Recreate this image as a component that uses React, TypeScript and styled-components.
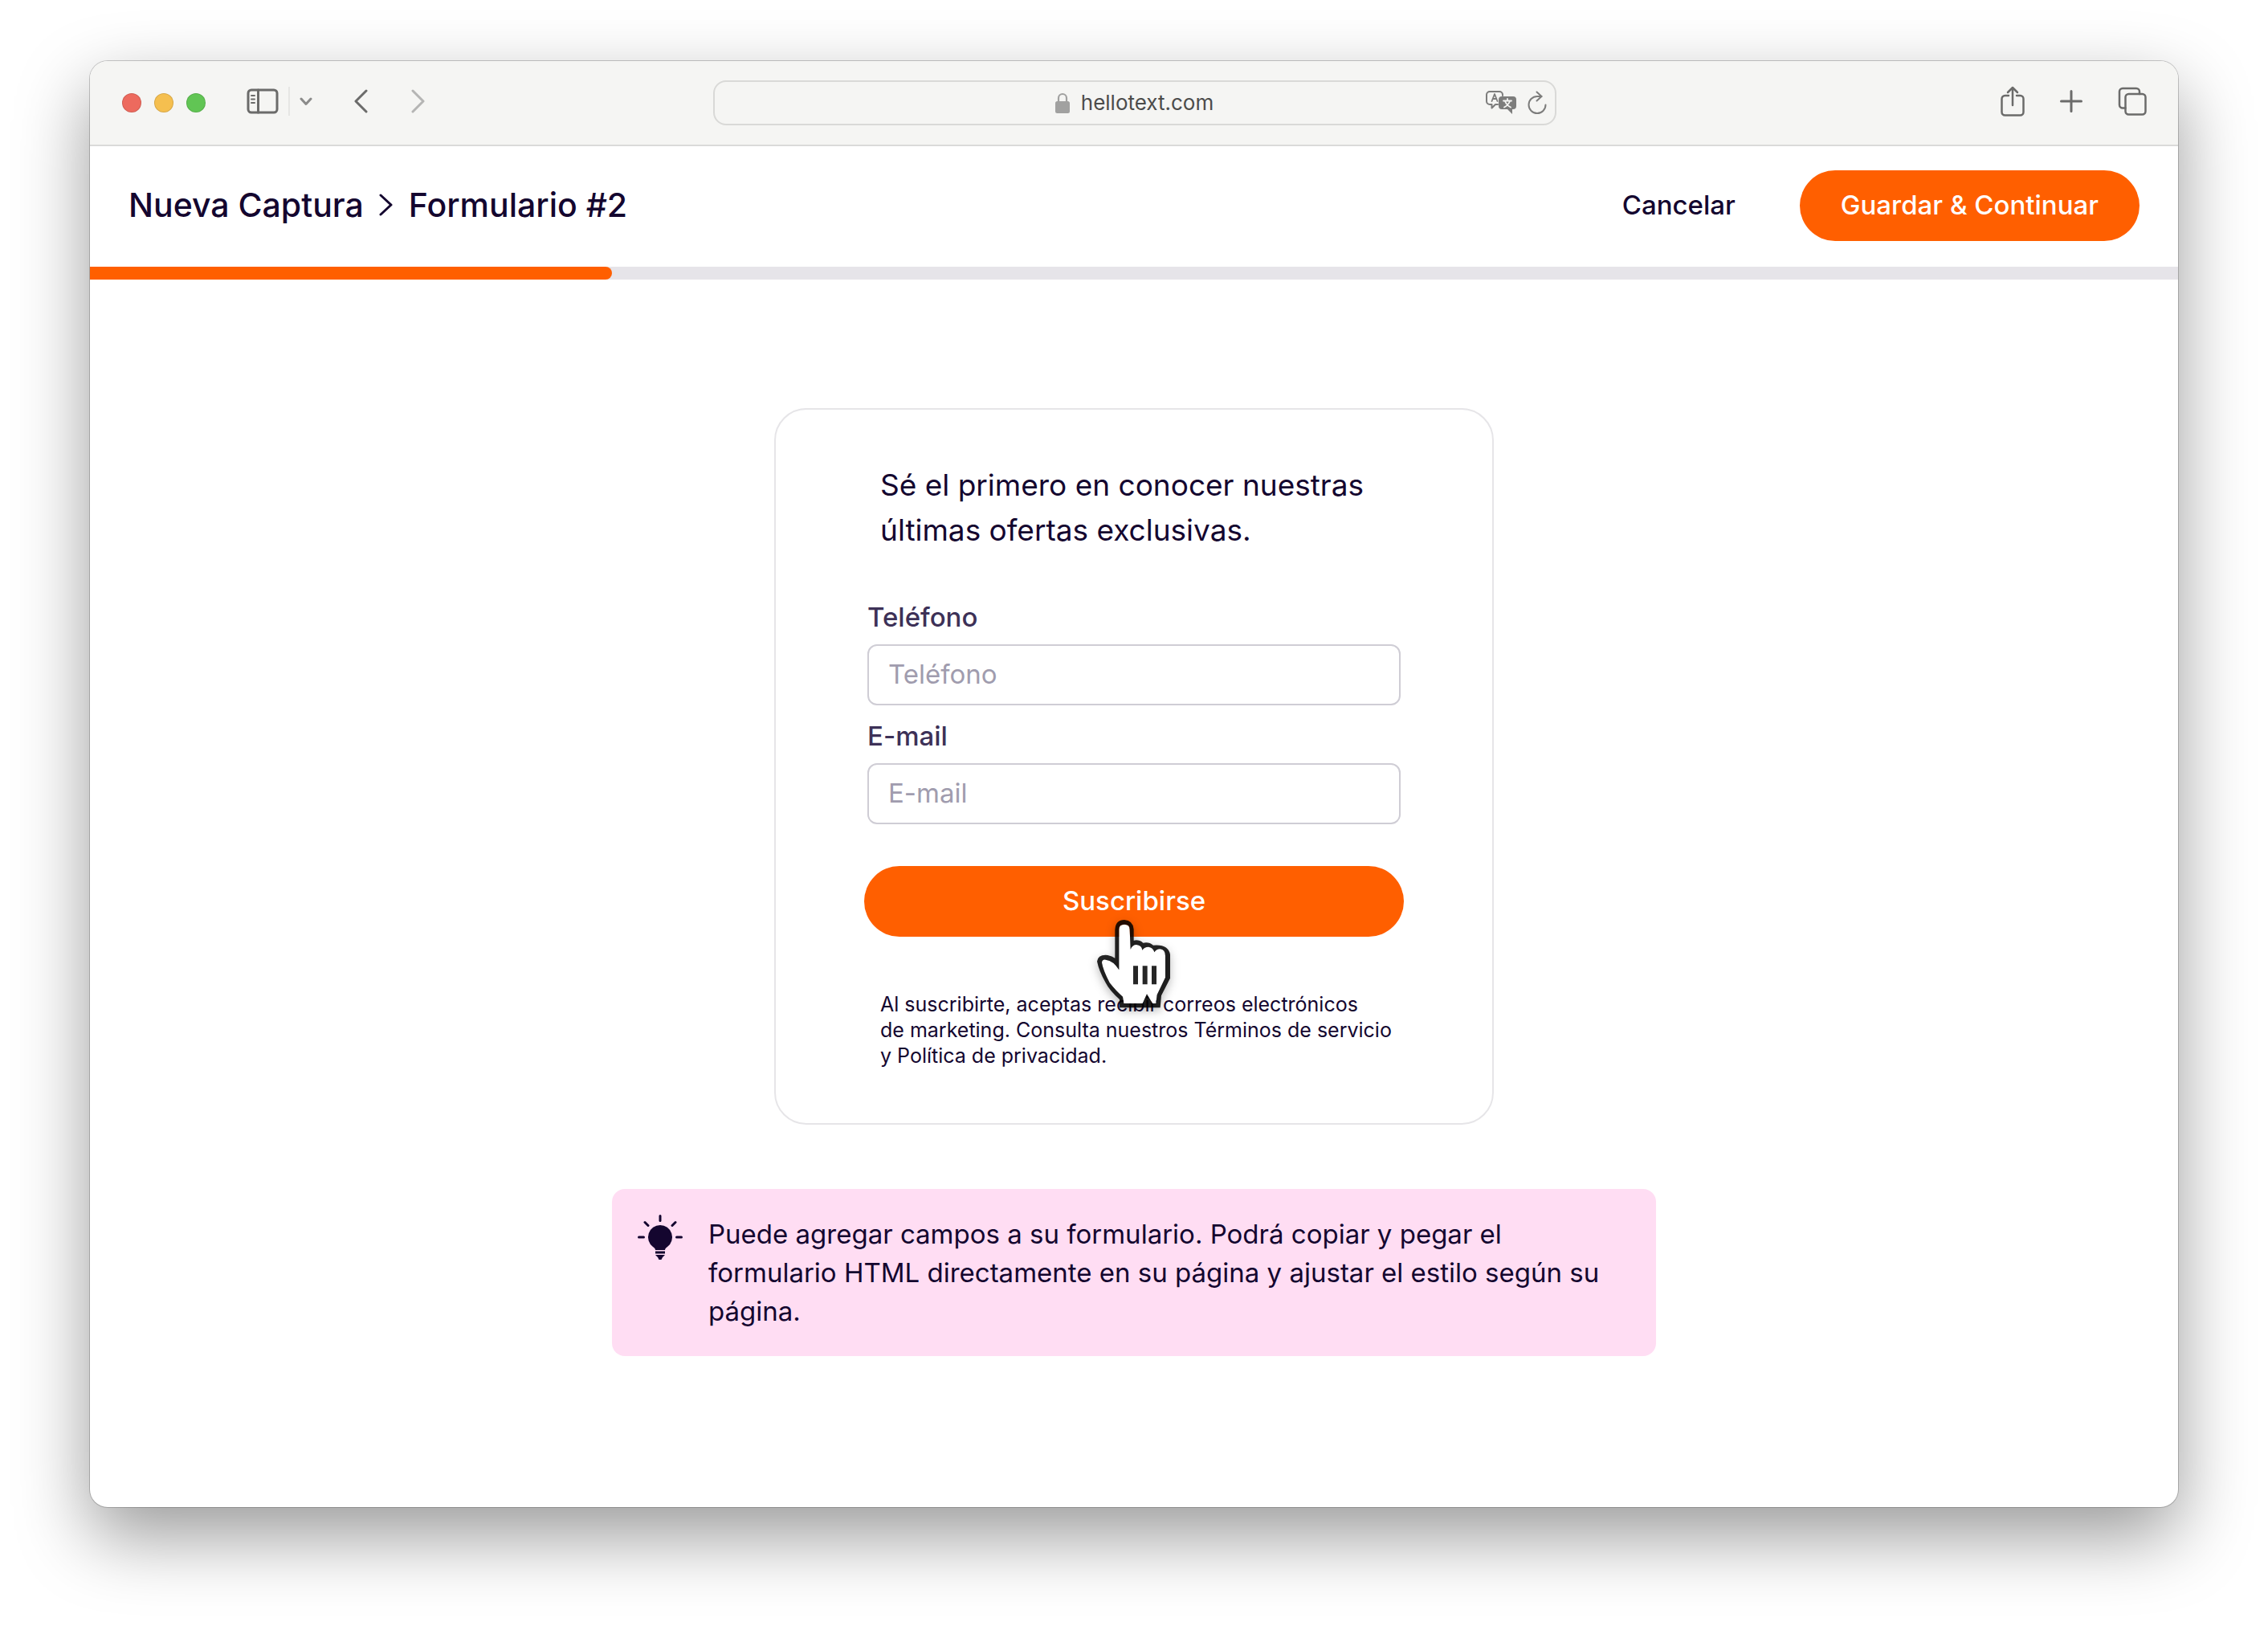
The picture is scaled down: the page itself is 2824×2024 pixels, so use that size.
import React, { useState } from "react";
import styled, { createGlobalStyle } from "styled-components";

const ink = "#14062f";
const orange = "#ff5f00";
const icon = "#6b6b6a";

const GlobalStyle = createGlobalStyle`
  * { box-sizing: border-box; }
  body {
    margin: 0;
    background: #ffffff;
    color: ${ink};
    font-family: Inter, "Liberation Sans", sans-serif;
    -webkit-font-smoothing: antialiased;
  }
  button, input { font: inherit; color: inherit; }
`;

const Desktop = styled.div`
  min-height: 100vh;
  padding: 76px 112px 148px;
  display: flex;
`;

const Window = styled.div`
  flex: 1;
  min-width: 0;
  display: flex;
  flex-direction: column;
  overflow: hidden;
  border-radius: 22px;
  background: #ffffff;
  box-shadow: 0 0 0 1px rgba(0, 0, 0, 0.2), 0 36px 90px rgba(0, 0, 0, 0.4);
`;

const Toolbar = styled.div`
  display: grid;
  grid-template-columns: 1fr minmax(0, 1050px) 1fr;
  align-items: center;
  height: 104px;
  padding: 0 39px 0 40px;
  background: #f5f5f3;
`;

const ToolGroup = styled.div<{ $end?: boolean }>`
  display: flex;
  align-items: center;
  justify-content: ${(p) => (p.$end ? "flex-end" : "flex-start")};
  gap: ${(p) => (p.$end ? 44 : 51)}px;
  padding-bottom: 4px;
`;

const Lights = styled.div`
  display: flex;
  gap: 16px;
  padding-top: 4px;
`;

const Light = styled.button<{ $color: string }>`
  width: 24px;
  height: 24px;
  padding: 0;
  border: 1px solid rgba(0, 0, 0, 0.12);
  border-radius: 50%;
  background: ${(p) => p.$color};
`;

const SidebarGroup = styled.div`
  display: flex;
  align-items: center;
  gap: 12px;
`;

const Separator = styled.span`
  width: 2px;
  height: 36px;
  background: #e6e6e4;
`;

const IconButton = styled.button`
  display: flex;
  padding: 0;
  border: 0;
  background: none;
  color: ${icon};

  &:disabled { color: #b5b5b4; }
`;

const NavGroup = styled.div`
  display: flex;
  gap: 54px;
`;

const AddressBar = styled.div`
  display: grid;
  grid-template-columns: 1fr auto 1fr;
  align-items: center;
  height: 56px;
  padding: 0 10px;
  border: 2px solid #d9d9d7;
  border-radius: 16px;
`;

const Address = styled.label`
  grid-column: 2;
  display: flex;
  align-items: center;
  gap: 14px;
`;

const AddressInput = styled.input`
  field-sizing: content;
  padding: 0;
  border: 0;
  outline: 0;
  background: none;
  color: #4c4c4b;
  font-size: 26px;
  line-height: 32px;
`;

const AddressActions = styled.div`
  display: flex;
  justify-content: flex-end;
  align-items: center;
  gap: 12px;
`;

const Header = styled.header`
  display: flex;
  align-items: center;
  justify-content: space-between;
  height: 152px;
  padding: 0 48px;
  box-shadow: inset 0 2px 0 #dadad9;
`;

const Breadcrumb = styled.nav`
  display: flex;
  align-items: center;
  gap: 18px;
  padding-bottom: 2px;
  font-size: 41px;
  line-height: 48px;
  font-weight: 500;
`;

const Crumb = styled.a`
  color: inherit;
  text-decoration: none;
`;

const Actions = styled.div`
  display: flex;
  align-items: center;
  gap: 80px;
  font-size: 33px;
  line-height: 40px;
  font-weight: 500;
`;

const TextButton = styled.button`
  padding: 0 0 2px;
  border: 0;
  background: none;
`;

const PrimaryButton = styled.button`
  height: 88px;
  padding: 0 51px 2px;
  border: 0;
  border-radius: 44px;
  background: ${orange};
  color: #ffffff;
  font-size: 33px;
  line-height: 40px;
  font-weight: 500;
`;

const Progress = styled.div`
  height: 16px;
  background: #e6e4e9;
`;

const ProgressBar = styled.div`
  height: 100%;
  border-radius: 0 8px 8px 0;
  background: ${orange};
`;

const Content = styled.main`
  flex: 1;
  display: flex;
  flex-direction: column;
  align-items: center;
  gap: 80px;
  padding: 160px 0;
`;

const Card = styled.form`
  width: 896px;
  max-width: 100%;
  display: flex;
  flex-direction: column;
  padding: 66px 110px 68px;
  border: 2px solid #e6e5e8;
  border-radius: 40px;
`;

const Title = styled.p`
  margin: 0 0 60px;
  padding-left: 20px;
  font-size: 37px;
  line-height: 56px;
`;

const Field = styled.div`
  display: flex;
  flex-direction: column;
  gap: 14px;
  padding: 0 4px;
  margin-bottom: 18px;
`;

const FieldLabel = styled.label`
  color: #3d3157;
  font-size: 33px;
  line-height: 40px;
  font-weight: 500;
`;

const TextInput = styled.input`
  width: 100%;
  height: 76px;
  padding: 0 24px 2px;
  border: 2px solid #cfcdd5;
  border-radius: 12px;
  background: #ffffff;
  font-size: 33px;
  line-height: 40px;

  &::placeholder { color: #a09cae; opacity: 1; }
`;

const SubmitRow = styled.div`
  position: relative;
  display: flex;
  flex-direction: column;
  margin: 34px 0 68px;
`;

const Pointer = styled.svg`
  position: absolute;
  top: 64px;
  left: calc(50% - 50px);
  pointer-events: none;
  filter: drop-shadow(0 4px 6px rgba(0, 0, 0, 0.3));
`;

const Legal = styled.p`
  margin: 0;
  padding-left: 20px;
  font-size: 25px;
  line-height: 32px;
`;

const Notice = styled.aside`
  width: 50%;
  display: flex;
  align-items: flex-start;
  gap: 32px;
  padding: 32px;
  border-radius: 16px;
  background: #ffddf3;

  svg { flex: none; }
`;

const NoticeText = styled.p`
  margin: 0;
  font-size: 33px;
  line-height: 48px;
`;

const stroke = {
  fill: "none",
  stroke: "currentColor",
  strokeWidth: 3,
  strokeLinecap: "round" as const,
  strokeLinejoin: "round" as const,
};

const SidebarIcon = () => (
  <svg width="40" height="32" viewBox="0 0 40 32" {...stroke}>
    <rect x="2" y="2" width="36" height="28" rx="4" />
    <path d="M14.500 2v28" />
    <path d="M6 9h4M6 13.500h4M6 18h4" strokeWidth="2" />
  </svg>
);

const ChevronDown = () => (
  <svg width="16" height="12" viewBox="0 0 16 12" {...stroke} stroke="#8b8b8a">
    <path d="M2 3l6 6.500L14 3" />
  </svg>
);

const ChevronLeft = () => (
  <svg width="18" height="30" viewBox="0 0 18 30" {...stroke}>
    <path d="M16 2L3 15l13 13" />
  </svg>
);

const ChevronRight = () => (
  <svg width="18" height="30" viewBox="0 0 18 30" {...stroke}>
    <path d="M2 2l13 13L2 28" />
  </svg>
);

const CrumbChevron = () => (
  <svg width="20" height="30" viewBox="0 0 20 30" {...stroke}>
    <path d="M3 3l13 12L3 27" />
  </svg>
);

const LockIcon = () => (
  <svg width="18" height="26" viewBox="0 0 18 26" fill="#a1a1a0">
    <rect x="0" y="11" width="18" height="15" rx="2.500" />
    <path d="M4 12V7a5 5 0 0 1 10 0v5" fill="none" stroke="#a1a1a0" strokeWidth="2.200" />
  </svg>
);

const TranslateIcon = () => (
  <svg width="40" height="30" viewBox="0 0 40 30" fill="none" stroke="#7d7d7c" strokeWidth="2" strokeLinejoin="round" strokeLinecap="round">
    <path d="M15 17h-3l-4.500 4.500V17H5a4 4 0 0 1-4-4V5a4 4 0 0 1 4-4h12a4 4 0 0 1 4 4v1" />
    <path d="M7.500 13L11 4l3.500 9M8.700 10h4.600" strokeWidth="1.800" />
    <path d="M20 7h14a4 4 0 0 1 4 4v8a4 4 0 0 1-4 4h-1v6l-6-6h-7a4 4 0 0 1-4-4v-8a4 4 0 0 1 4-4z" fill="#7d7d7c" stroke="none" />
    <path d="M22 12.500h10M27 10v2M24 13q2 5 7 7.500M30 13q-2 5-7 7.500" stroke="#f5f5f3" strokeWidth="1.800" />
  </svg>
);

const ReloadIcon = () => (
  <svg width="24" height="30" viewBox="0 0 24 30" {...stroke} stroke="#7d7d7c" strokeWidth="2">
    <path d="M22.500 17.500A10.500 10.500 0 1 1 12 7h5.500" />
    <path d="M11.500 1.500l6 5.500-6 5.500" />
  </svg>
);

const ShareIcon = () => (
  <svg width="30" height="38" viewBox="0 0 30 38" {...stroke} strokeWidth="2.500">
    <path d="M10 12H5.500a4 4 0 0 0-4 4v16.500a4 4 0 0 0 4 4h19a4 4 0 0 0 4-4V16a4 4 0 0 0-4-4H20" />
    <path d="M15 24V2M9 8l6-6 6 6" />
  </svg>
);

const PlusIcon = () => (
  <svg width="28" height="28" viewBox="0 0 28 28" {...stroke}>
    <path d="M14 1.500v25M1.500 14h25" />
  </svg>
);

const TabsIcon = () => (
  <svg width="36" height="36" viewBox="0 0 36 36" {...stroke} strokeWidth="2.500">
    <rect x="9.500" y="9" width="25" height="25.500" rx="4" />
    <path d="M9.500 26.500H6a4 4 0 0 1-4-4V6a4 4 0 0 1 4-4h17a4 4 0 0 1 4 4v3" />
  </svg>
);

const BulbIcon = () => (
  <svg width="56" height="56" viewBox="0 0 56 56" fill={ink} stroke={ink} aria-hidden="true">
    <path
      stroke="none"
      d="M28 13a15 15 0 0 1 9 27c-2 1.500-3 2.500-3 4H22c0-1.500-1-2.500-3-4a15 15 0 0 1 9-27zM22 45.500h12v3H22zM22 50h12l-3 3-1.500 3h-3l-1.500-3z"
    />
    <path
      d="M28 1.500v6M1.500 28h6M48.500 28h6M9 9.500l4 4M47 9.500l-4 4"
      fill="none"
      strokeWidth="3"
      strokeLinecap="round"
    />
  </svg>
);

const hand =
  "M160 110Q160 92 180 92Q200 92 200 110L203 185Q210 168 225 168Q245 170 247 188Q255 176 270 176Q287 178 292 196Q300 184 313 184Q333 186 333 210V290L302 355L298 387H285L264 352L248 387H178L174 362Q150 342 125 310Q100 262 96 235Q97 222 110 224Q140 228 160 262Z";
const handEdge =
  "M145 112Q147 75 180 75Q212 77 215 110V152Q235 148 250 161Q272 156 288 170Q345 165 351 205V293L318 358L314 403H162V372Q125 340 110 310Q85 265 78 230Q82 203 118 207Q134 210 145 218Z";

const HandPointer = () => (
  <Pointer width="100" height="120" viewBox="66 66 300 360" aria-hidden="true">
    <path d={hand} fill="#ffffff" />
    <path d={`${handEdge}${hand}`} fillRule="evenodd" fill="rgba(0,0,0,0.85)" />
    <path d="M213 247h18v69h-18zM248 247h18v69h-18zM282 247h18v69h-18z" fill="#262626" />
  </Pointer>
);

export default function App() {
  const [url, setUrl] = useState("hellotext.com");
  const progress = 25;

  return (
    <>
      <GlobalStyle />
      <Desktop>
        <Window>
          <Toolbar>
            <ToolGroup>
              <Lights>
                <Light $color="#ed6a5e" aria-label="Cerrar" />
                <Light $color="#f5bf4f" aria-label="Minimizar" />
                <Light $color="#61c554" aria-label="Ampliar" />
              </Lights>
              <SidebarGroup>
                <IconButton aria-label="Barra lateral"><SidebarIcon /></IconButton>
                <Separator />
                <IconButton aria-label="Grupos de pestañas"><ChevronDown /></IconButton>
              </SidebarGroup>
              <NavGroup>
                <IconButton aria-label="Atrás"><ChevronLeft /></IconButton>
                <IconButton aria-label="Adelante" disabled><ChevronRight /></IconButton>
              </NavGroup>
            </ToolGroup>
            <AddressBar>
              <Address>
                <LockIcon />
                <AddressInput aria-label="Dirección" value={url} onChange={(e) => setUrl(e.target.value)} />
              </Address>
              <AddressActions>
                <IconButton aria-label="Traducir"><TranslateIcon /></IconButton>
                <IconButton aria-label="Recargar"><ReloadIcon /></IconButton>
              </AddressActions>
            </AddressBar>
            <ToolGroup $end>
              <IconButton aria-label="Compartir"><ShareIcon /></IconButton>
              <IconButton aria-label="Nueva pestaña"><PlusIcon /></IconButton>
              <IconButton aria-label="Ver pestañas"><TabsIcon /></IconButton>
            </ToolGroup>
          </Toolbar>

          <Header>
            <Breadcrumb>
              <Crumb href="#captura">Nueva Captura</Crumb>
              <CrumbChevron />
              <span>Formulario #2</span>
            </Breadcrumb>
            <Actions>
              <TextButton>Cancelar</TextButton>
              <PrimaryButton>Guardar &amp; Continuar</PrimaryButton>
            </Actions>
          </Header>
          <Progress role="progressbar" aria-valuenow={progress}>
            <ProgressBar style={{ width: `${progress}%` }} />
          </Progress>

          <Content>
            <Card onSubmit={(e) => e.preventDefault()}>
              <Title>
                Sé el primero en conocer nuestras
                <br />
                últimas ofertas exclusivas.
              </Title>
              <Field>
                <FieldLabel htmlFor="phone">Teléfono</FieldLabel>
                <TextInput id="phone" type="tel" placeholder="Teléfono" />
              </Field>
              <Field>
                <FieldLabel htmlFor="email">E-mail</FieldLabel>
                <TextInput id="email" type="email" placeholder="E-mail" />
              </Field>
              <SubmitRow>
                <PrimaryButton type="submit">Suscribirse</PrimaryButton>
                <HandPointer />
              </SubmitRow>
              <Legal>
                Al suscribirte, aceptas recibir correos electrónicos
                <br />
                de marketing. Consulta nuestros Términos de servicio
                <br />
                y Política de privacidad.
              </Legal>
            </Card>
            <Notice>
              <BulbIcon />
              <NoticeText>
                Puede agregar campos a su formulario. Podrá copiar y pegar el
                formulario HTML directamente en su página y ajustar el estilo
                según su página.
              </NoticeText>
            </Notice>
          </Content>
        </Window>
      </Desktop>
    </>
  );
}
